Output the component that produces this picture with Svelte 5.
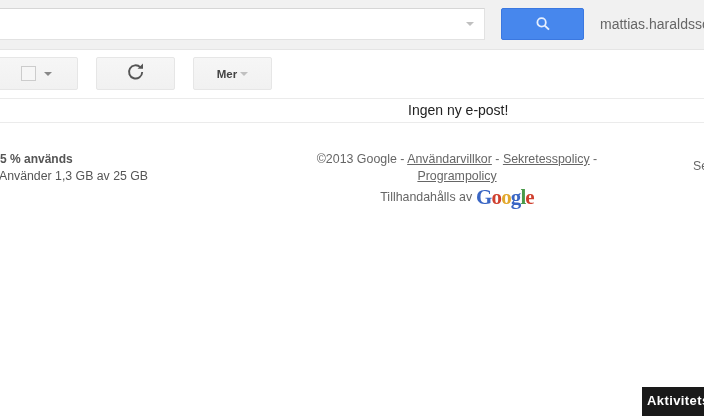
<script>
  const logo = [
    { ch: "G", color: "#3a66c4" },
    { ch: "o", color: "#d0402f" },
    { ch: "o", color: "#e2a82c" },
    { ch: "g", color: "#3a66c4" },
    { ch: "l", color: "#4a9a4a" },
    { ch: "e", color: "#d0402f" },
  ];
</script>

<div class="page">
  <header class="top">
    <div class="search">
      <span class="caret light"></span>
    </div>
    <button class="search-btn" aria-label="Sök">
      <svg width="18" height="18" viewBox="0 0 18 18" fill="none" stroke="#e8f0fe">
        <circle cx="7.6" cy="7.4" r="4.2" stroke-width="1.8" />
        <path d="M10.8 10.6 L15 14.6" stroke-width="2" />
      </svg>
    </button>
    <span class="user">mattias.haraldsson</span>
  </header>

  <div class="toolbar">
    <div class="btn select">
      <span class="check"></span>
      <span class="caret"></span>
    </div>
    <div class="btn refresh">
      <svg class="reload" width="20" height="20" viewBox="0 0 20 20" fill="none">
        <path d="M14.4 5.4 A6.6 6.6 0 1 0 16.2 10" stroke="#555" stroke-width="1.9" />
        <path d="M11.6 6.8 H17 V1.6 Z" fill="#555" />
      </svg>
    </div>
    <div class="btn more">
      <span>Mer</span>
      <span class="caret light"></span>
    </div>
  </div>

  <div class="message">Ingen ny e-post!</div>

  <footer class="footer">
    <div class="usage">
      <b>5 % används</b>
      <span>Använder 1,3 GB av 25 GB</span>
    </div>
    <div class="legal">
      <div>©2013 Google - <u>Användarvillkor</u> - <u>Sekretesspolicy</u> -</div>
      <div><u>Programpolicy</u></div>
      <div class="powered">
        Tillhandahålls av
        <span class="logo">{#each logo as l}<span style="color: {l.color}">{l.ch}</span>{/each}</span>
      </div>
    </div>
    <div class="side">Senaste</div>
  </footer>

  <div class="activity">Aktivitetsinfo</div>
</div>

<style>
  :global(body) {
    margin: 0;
    background: #fff;
    overflow: hidden;
  }

  .page {
    position: relative;
    width: 704px;
    height: 416px;
    overflow: hidden;
    background: #fff;
    font-family: "Liberation Sans", Arial, sans-serif;
    font-size: 12px;
    color: #444;
    filter: blur(0.6px);
  }

  .top {
    display: flex;
    align-items: flex-start;
    height: 41px;
    padding-top: 8px;
    background: #f1f1f1;
    border-bottom: 1px solid #e5e5e5;
    white-space: nowrap;
  }

  .search {
    flex: none;
    display: flex;
    align-items: center;
    justify-content: flex-end;
    box-sizing: border-box;
    width: 489px;
    height: 32px;
    margin-left: -4px;
    padding-right: 10px;
    background: #fff;
    border: 1px solid #e2e2e2;
    border-top-color: #d6d6d6;
  }

  .search-btn {
    flex: none;
    display: flex;
    align-items: center;
    justify-content: center;
    box-sizing: border-box;
    width: 83px;
    height: 32px;
    margin-left: 16px;
    padding: 0;
    background: #4787ed;
    border: 1px solid #3b78e0;
    border-radius: 2px;
  }

  .user {
    margin-left: 16px;
    margin-top: 8px;
    font-size: 14px;
    color: #666;
  }

  .caret {
    display: inline-block;
    width: 0;
    height: 0;
    border-left: 4px solid transparent;
    border-right: 4px solid transparent;
    border-top: 4px solid #888;
  }

  .caret.light {
    border-top-color: #c0c0c0;
  }

  .toolbar {
    display: flex;
    gap: 18px;
    height: 49px;
    box-sizing: border-box;
    padding-top: 7px;
    margin-left: -8px;
    border-bottom: 1px solid #ebebeb;
  }

  .btn {
    flex: none;
    display: flex;
    align-items: center;
    justify-content: center;
    box-sizing: border-box;
    height: 33px;
    background: linear-gradient(#f6f6f6, #f1f1f1);
    border: 1px solid #e6e6e6;
    border-radius: 2px;
  }

  .select {
    width: 86px;
    gap: 8px;
    padding-left: 3px;
  }

  .check {
    width: 13px;
    height: 13px;
    background: #f6f6f6;
    border: 1px solid #cccccc;
  }

  .refresh {
    width: 79px;
    padding-bottom: 3px;
  }

  .reload {
    display: block;
  }

  .more {
    width: 79px;
    gap: 3px;
    font-size: 11.5px;
    font-weight: bold;
    color: #444;
  }

  .message {
    height: 24px;
    box-sizing: border-box;
    border-bottom: 1px solid #ebebeb;
    padding-top: 3px;
    padding-left: 408px;
    font-size: 14px;
    line-height: 16px;
    color: #222;
  }

  .footer {
    display: flex;
    align-items: flex-start;
    padding-top: 28px;
    font-size: 12.3px;
    color: #666;
    white-space: nowrap;
  }

  .usage {
    flex: none;
    display: flex;
    flex-direction: column;
    width: 298px;
    margin-left: -1px;
    line-height: 17px;
    color: #555;
  }

  .usage b {
    padding-left: 1px;
    font-size: 12px;
  }

  .legal {
    flex: none;
    width: 320px;
    text-align: center;
    font-size: 12.4px;
    line-height: 17px;
  }

  .powered {
    display: flex;
    justify-content: center;
    align-items: center;
    gap: 4px;
    height: 24px;
  }

  .logo {
    font-family: "Liberation Serif", serif;
    font-size: 21px;
    font-weight: bold;
    letter-spacing: -0.9px;
    line-height: 22px;
  }

  .side {
    margin-left: 76px;
    margin-top: 8px;
  }

  .activity {
    position: absolute;
    left: 642px;
    top: 387px;
    width: 70px;
    height: 29px;
    box-sizing: border-box;
    padding: 6px 0 0 5px;
    background: #1a1a1a;
    color: #fff;
    font-size: 13px;
    font-weight: bold;
    letter-spacing: 0.4px;
    white-space: nowrap;
    overflow: hidden;
  }
</style>
